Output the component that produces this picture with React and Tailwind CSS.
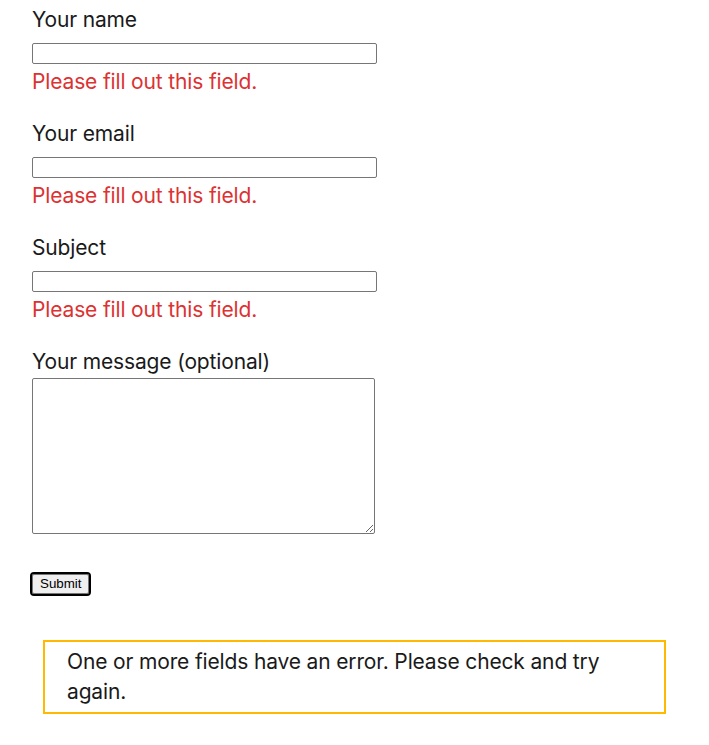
export default function App() {
  const field = (label) => (
    <div className="mb-[22px]">
      <div className="h-[30px] pt-[1px] leading-[30px]">{label}</div>
      <input type="text" className="mt-[9px] block h-[21px] w-[345px] rounded-[2px] border border-[#767676] bg-white" />
      <div className="mt-[2px] h-[30px] pt-[1px] leading-[30px] text-[#dc3232]">Please fill out this field.</div>
    </div>
  );
  return (
    <div className="bg-white min-h-[745px] px-[32px] pt-[4px] text-[21px] tracking-[-0.15px] text-[#1a1a1a]" style={{ fontFamily: 'Inter, "Noto Sans", sans-serif' }}>
      {field("Your name")}
      {field("Your email")}
      {field("Subject")}
      <div className="mb-[22px]">
        <div className="h-[30px] pt-[1px] leading-[30px]">Your message (optional)</div>
        <textarea className="mt-[2px] block h-[156px] w-[343px] rounded-[2px] border border-[#767676] bg-white" />
      </div>
      <div className="pt-[18px]">
        <button className="block h-[20px] rounded-[2px] border border-[#767676] bg-[#efefef] px-[7px] text-[13.33px] leading-[16px] tracking-normal text-black outline-2 outline-black outline-offset-0" style={{ fontFamily: '"Liberation Sans", Arial, sans-serif' }}>Submit</button>
      </div>
      <div className="mx-[11px] mt-[46px] border-2 border-[#ffb900] px-[22px] py-[5px] leading-[30px]">
        One or more fields have an error. Please check and try again.
      </div>
    </div>
  );
}
